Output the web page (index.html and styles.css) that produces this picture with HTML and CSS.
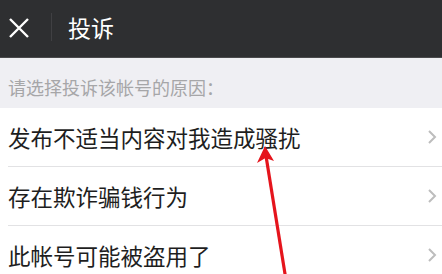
FILE: index.html
```html
<!DOCTYPE html>
<html lang="zh-CN">
<head>
<meta charset="utf-8">
<title>投诉</title>
<link rel="stylesheet" href="styles.css">
</head>
<body>
<div class="page">
  <header class="topbar">
    <span class="close">
      <svg width="22" height="20" viewBox="0 0 22 20"><path d="M2 1 L20 19 M20 1 L2 19" stroke="#fff" stroke-width="2.4" fill="none"/></svg>
    </span>
    <span class="divider"></span>
    <span class="title">投诉</span>
  </header>
  <div class="hint">请选择投诉该帐号的原因：</div>
  <ul class="list">
    <li class="item"><span class="label">发布不适当内容对我造成骚扰</span><svg class="chev" width="10" height="14" viewBox="0 0 10 14"><path d="M2 1 L8 7 L2 13" stroke="#bdbdbd" stroke-width="2" fill="none"/></svg></li>
    <li class="item"><span class="label">存在欺诈骗钱行为</span><svg class="chev" width="10" height="14" viewBox="0 0 10 14"><path d="M2 1 L8 7 L2 13" stroke="#bdbdbd" stroke-width="2" fill="none"/></svg></li>
    <li class="item"><span class="label">此帐号可能被盗用了</span><svg class="chev" width="10" height="14" viewBox="0 0 10 14"><path d="M2 1 L8 7 L2 13" stroke="#bdbdbd" stroke-width="2" fill="none"/></svg></li>
  </ul>
  <svg class="arrow" width="442" height="274" viewBox="0 0 442 274">
    <line x1="286" y1="280" x2="266" y2="156" stroke="#e5141c" stroke-width="3.2"/>
    <path d="M265 146 L257 163 L265.5 158 L274 161 Z" fill="#e5141c"/>
  </svg>
</div>
</body>
</html>
```
FILE: styles.css
```css
html, body {
  margin: 0;
  padding: 0;
  background: #ffffff;
  overflow: hidden;
}
.page {
  position: relative;
  width: 442px;
  height: 274px;
  font-family: "Noto Sans CJK SC", "Noto Sans", sans-serif;
}
.topbar {
  height: 57px;
  background: #2e2f31;
  border-bottom: 1px solid #4a4a4c;
  display: flex;
  align-items: center;
  padding-left: 8px;
  padding-bottom: 3px;
  box-sizing: border-box;
  height: 58px;
}
.close {
  display: flex;
  width: 22px;
  height: 20px;
  margin-top: 1px;
}
.divider {
  width: 1px;
  height: 28px;
  background: #404043;
  margin-left: 21px;
  margin-right: 16px;
}
.title {
  color: #ffffff;
  font-size: 23px;
  line-height: 28px;
}
.hint {
  height: 50px;
  background: #efeff3;
  color: #a6a6a8;
  font-size: 18px;
  line-height: 20px;
  padding-left: 8px;
  display: flex;
  align-items: flex-end;
  padding-bottom: 11px;
  box-sizing: border-box;
}
.list {
  list-style: none;
  margin: 0;
  padding: 0 0 0 8px;
  background: #fff;
}
.item {
  height: 58px;
  border-bottom: 1px solid #e2e2e4;
  display: flex;
  align-items: center;
  justify-content: space-between;
  padding-right: 5px;
}
.label {
  color: #1e1e1e;
  font-size: 22.5px;
  line-height: 30px;
}
.chev {
  display: block;
}
.arrow {
  position: absolute;
  left: 0;
  top: 0;
  pointer-events: none;
}
```
